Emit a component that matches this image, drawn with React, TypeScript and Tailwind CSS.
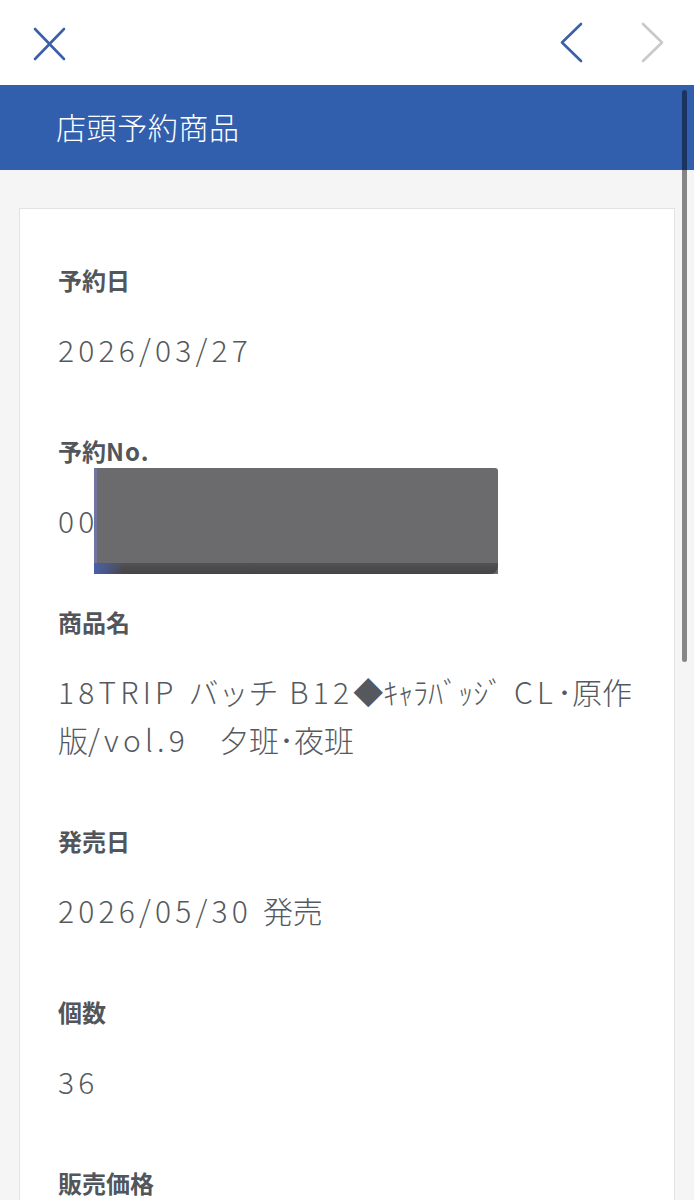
import React from "react";

const font = {
  fontFamily: '"Hiragino Sans", "Noto Sans CJK JP", "Noto Sans", sans-serif',
};

function L({ children }: { children: React.ReactNode }) {
  return <span className="tracking-[0.14em]">{children}</span>;
}

function Item({ label, children, extra }: { label: React.ReactNode; children: React.ReactNode; extra?: React.ReactNode }) {
  return (
    <div className="relative">
      <div className="text-[24px] leading-[36px] font-bold text-[#52565b]">{label}</div>
      <div className="mt-[27px] text-[30px] leading-[48px] font-light text-[#55595e]">
        {children}
      </div>
      {extra}
    </div>
  );
}

export default function App() {
  return (
    <div className="relative w-[694px] min-h-[1200px] bg-[#f5f5f5] overflow-hidden" style={font}>
      {/* top bar */}
      <div className="h-[85px] bg-white flex items-center justify-between">
        <svg width="34" height="34" viewBox="0 0 34 34" className="ml-[33px] mt-[3px]">
          <path d="M2 2 L31 32 M31 2 L2 32" stroke="#3b5fa9" strokeWidth="2.6" strokeLinecap="round" fill="none" />
        </svg>
        <div className="flex items-center mr-[30px] gap-[56px]">
          <svg width="24" height="42" viewBox="0 0 24 42">
            <path d="M21 2 L2 20.5 L21 39" stroke="#3b5fa9" strokeWidth="2.6" strokeLinecap="round" strokeLinejoin="round" fill="none" />
          </svg>
          <svg width="24" height="42" viewBox="0 0 24 42">
            <path d="M3 2 L22 20.5 L3 39" stroke="#c9c9c9" strokeWidth="2.6" strokeLinecap="round" strokeLinejoin="round" fill="none" />
          </svg>
        </div>
      </div>

      {/* blue header */}
      <div className="h-[85px] bg-[#315ead] flex items-center pl-[56px]">
        <span className="text-white text-[30px] font-light tracking-[0.02em] leading-none -mt-[4px]">店頭予約商品</span>
      </div>

      {/* content */}
      <div className="pt-[38px] px-[19px]">
        <div className="bg-white border border-[#e3e3e3] pl-[38px] pr-[30px] pt-[53px] pb-[40px] flex flex-col gap-[60px]">
          <Item label="予約日">
            <L>2026/03/27</L>
          </Item>
          <Item
            label={
              <>
                予約<span className="tracking-[0.04em]">No.</span>
              </>
            }
            extra={
              <div className="absolute left-[36px] top-[35px] w-[404px] h-[106px] rounded-tr-[3px] overflow-hidden bg-[#6b6b6e]">
                <div className="absolute left-0 top-0 w-[3px] h-full bg-[#6f74a0]" />
                <div className="absolute left-0 bottom-0 w-full h-[11px] bg-gradient-to-b from-[#525255] to-[#444447] rounded-br-[8px]" />
                <div className="absolute left-0 bottom-0 w-[30px] h-[11px] bg-gradient-to-r from-[#4a5fa8] to-transparent" />
              </div>
            }
          >
            <L>00</L>
          </Item>
          <Item label="商品名">
            <L>18TRIP </L>バッチ<L> B12</L>◆ｷｬﾗﾊﾞｯｼﾞ<L> CL</L>･原作
            <br />
            版<L>/vol.9</L>　夕班･夜班
          </Item>
          <Item label="発売日">
            <L>2026/05/30 </L>発売
          </Item>
          <Item label="個数">
            <L>36</L>
          </Item>
          <Item label="販売価格">&nbsp;</Item>
        </div>
      </div>

      {/* scroll indicator */}
      <div className="absolute right-[7px] top-[90px] w-[5px] h-[572px] rounded-full bg-black/45" />
    </div>
  );
}
